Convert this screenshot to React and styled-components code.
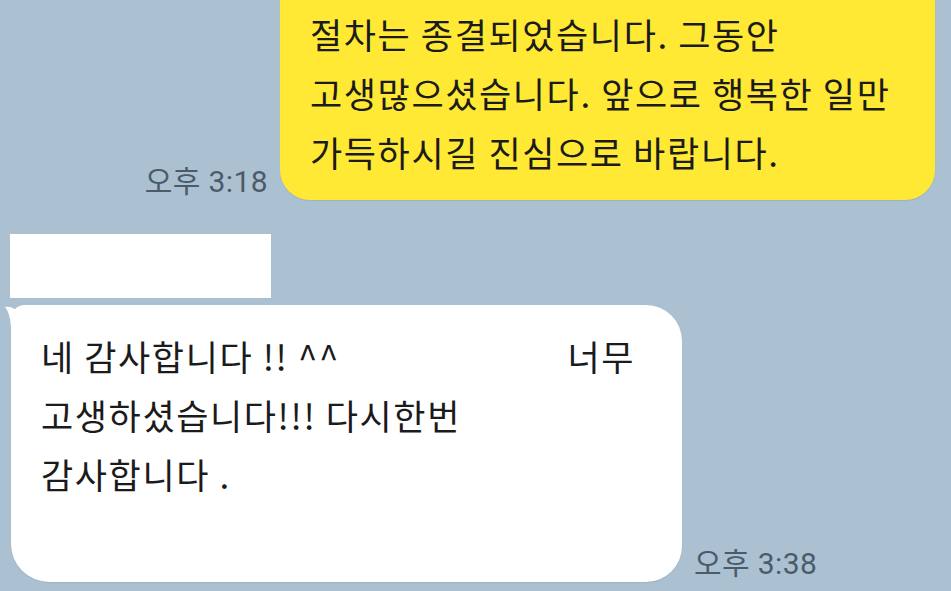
import React from 'react';
import styled, { createGlobalStyle } from 'styled-components';

const GlobalStyle = createGlobalStyle`
  html, body {
    margin: 0;
    padding: 0;
    background-color: #abc1d2;
  }
  body {
    font-family: "Noto Sans CJK KR", "Noto Sans", sans-serif;
  }
`;

const Chat = styled.div`
  display: flex;
  flex-direction: column;
  height: 591px;
  overflow: hidden;
  background-color: #abc1d2;
`;

const MessageRow = styled.div`
  display: flex;
  align-items: flex-end;
  justify-content: ${(p) => (p.$mine ? 'flex-end' : 'flex-start')};
  gap: 12px;
  padding: ${(p) => (p.$mine ? '0 16px 0 0' : '0 0 0 11px')};
  margin-top: ${(p) => p.$top || 0}px;
`;

const Bubble = styled.div`
  position: relative;
  box-sizing: border-box;
  width: ${(p) => p.$width}px;
  height: ${(p) => p.$height}px;
  background-color: ${(p) => (p.$mine ? '#ffe934' : '#ffffff')};
  color: #1b1b1b;
  font-size: 35px;
  letter-spacing: 1.6px;
  line-height: 59px;
  padding: ${(p) => (p.$mine ? '4px 30px 0 30px' : '21px 47px 0 30px')};
  border-radius: ${(p) => (p.$mine ? '0 0 30px 30px' : '14px 36px 36px 38px')};
  box-shadow: 0 1px 1px rgba(60, 80, 100, 0.12);
`;

const Line = styled.div`
  display: flex;
  justify-content: space-between;
  white-space: pre;
`;

const Time = styled.span`
  font-family: Roboto, "Noto Sans CJK KR", sans-serif;
  font-size: 30px;
  letter-spacing: 0.4px;
  line-height: 1;
  color: #4b5b69;
  margin-bottom: 3px;
  white-space: nowrap;
`;

const SenderBlock = styled.div`
  margin-top: 34px;
  padding-left: 10px;
`;

const NameLabel = styled.div`
  width: 261px;
  height: 64px;
  background-color: #ffffff;
`;

const Tail = styled.svg`
  position: absolute;
  left: -6px;
  top: 0;
`;

export default function App() {
  return (
    <>
      <GlobalStyle />
      <Chat>
        <MessageRow $mine>
          <Time>오후 3:18</Time>
          <Bubble $mine $width={655} $height={200}>
            <Line>절차는 종결되었습니다. 그동안</Line>
            <Line>고생많으셨습니다. 앞으로 행복한 일만</Line>
            <Line>가득하시길 진심으로 바랍니다.</Line>
          </Bubble>
        </MessageRow>

        <SenderBlock>
          <NameLabel />
        </SenderBlock>

        <MessageRow $top={7}>
          <Bubble $width={671} $height={277}>
            <Tail width="30" height="26" viewBox="0 0 30 26">
              <path
                d="M0 2 C6 1 11 4 16 10 C19 5 24 1 30 0 L30 26 L6 26 C6 15 4 7 0 2 Z"
                fill="#ffffff"
              />
            </Tail>
            <Line>
              <span>네 감사합니다 !! ^^</span>
              <span>너무</span>
            </Line>
            <Line>고생하셨습니다!!! 다시한번</Line>
            <Line>감사합니다 .</Line>
          </Bubble>
          <Time>오후 3:38</Time>
        </MessageRow>
      </Chat>
    </>
  );
}
